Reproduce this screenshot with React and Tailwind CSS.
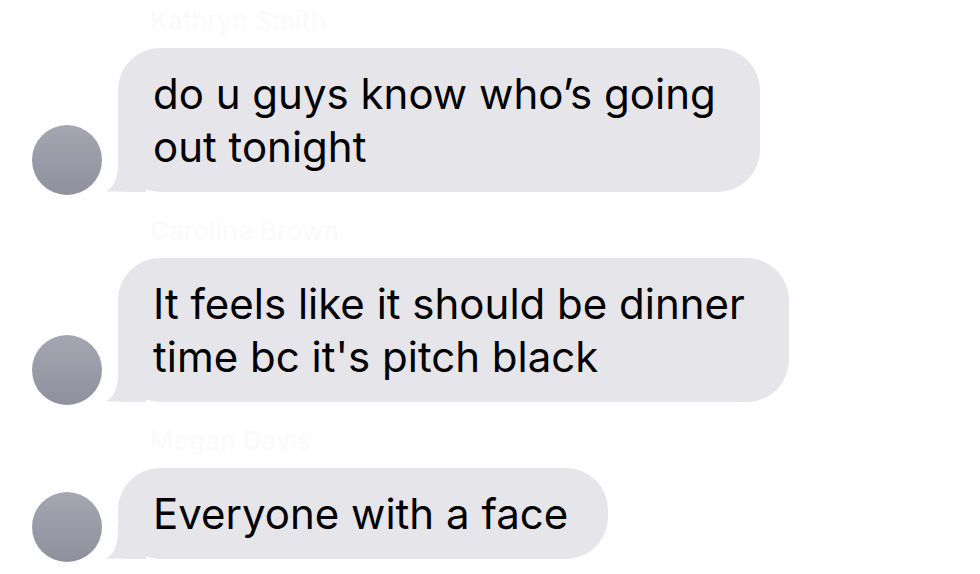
import React from "react";

function Tail() {
  return (
    <svg
      className="absolute left-[-12px] bottom-0"
      width="40"
      height="36"
      viewBox="0 0 40 36"
    >
      <path
        d="M12 0 L40 0 L40 36 L20 36 C14 35 6 35.5 0 35.5 C8 31 12 22 12 8 Z"
        fill="#e5e5ea"
      />
    </svg>
  );
}

function Avatar() {
  return (
    <div className="w-[70px] h-[70px] shrink-0 rounded-full bg-gradient-to-b from-[#a4a7b2] to-[#8e919d] mb-[-3px]" />
  );
}

function Message({ name, lines, right }) {
  return (
    <div className="flex flex-col">
      <div className="h-[30px] pl-[150px] text-[26px] leading-[30px] font-medium text-[#fafafb] mb-[12px]">
        {name}
      </div>
      <div className="flex items-end pl-[32px]">
        <Avatar />
        <div className="relative ml-[16px]">
          <Tail />
          <div
            className={`relative rounded-[42px] bg-[#e5e5ea] pl-[35px] py-[19px] text-[42px] leading-[53px] text-black ${right}`}
          >
            {lines.map((l, i) => (
              <div key={i} className="whitespace-nowrap">
                {l}
              </div>
            ))}
          </div>
        </div>
      </div>
    </div>
  );
}

export default function App() {
  return (
    <div
      className="w-[980px] h-[574px] bg-white overflow-hidden pt-[6px] flex flex-col gap-[24px]"
      style={{ fontFamily: "Inter, 'Liberation Sans', sans-serif" }}
    >
      <Message
        name="Kathryn Smith"
        lines={["do u guys know who’s going", "out tonight"]}
        right="pr-[44px]"
      />
      <Message
        name="Caroline Brown"
        lines={["It feels like it should be dinner", "time bc it's pitch black"]}
        right="pr-[44px]"
      />
      <Message
        name="Megan Davis"
        lines={["Everyone with a face"]}
        right="pr-[40px]"
      />
    </div>
  );
}
